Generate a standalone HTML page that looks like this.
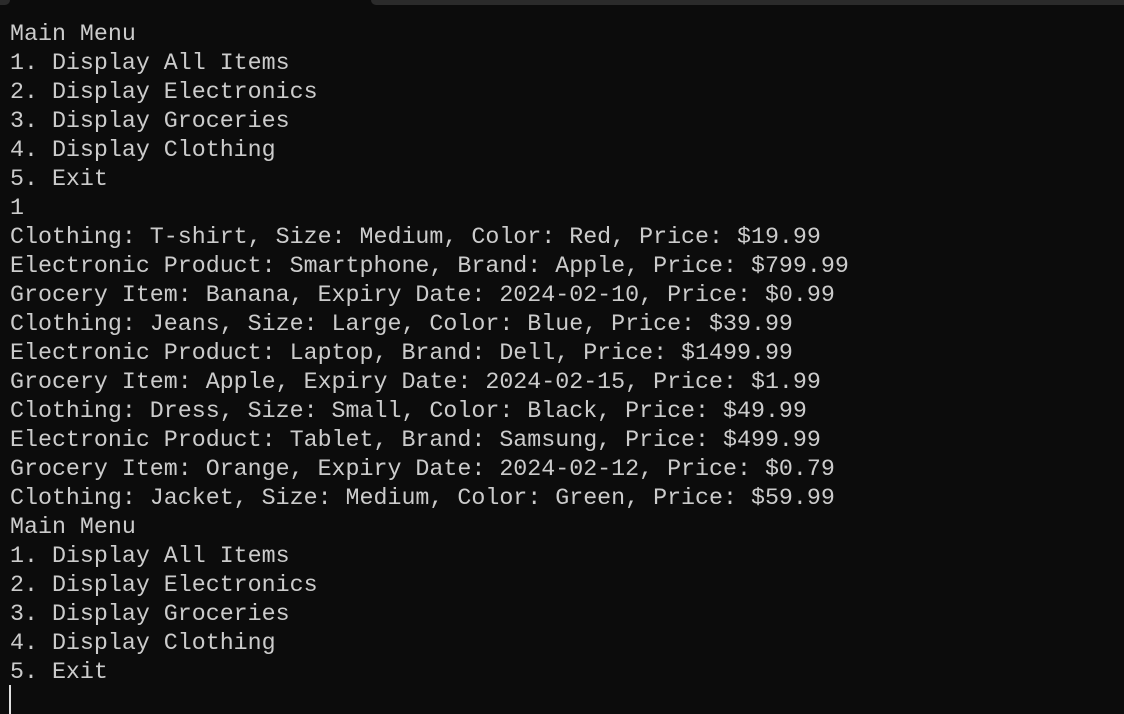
<!DOCTYPE html>
<html><head><style>
html,body{margin:0;padding:0;background:#0c0c0c;width:1124px;height:714px;overflow:hidden}
.t{position:absolute;left:10px;top:20px;font-family:"Liberation Mono",monospace;font-size:23.3px;line-height:29px;color:#cccccc;white-space:pre;margin:0}
.b1{position:absolute;left:0;top:0;width:10px;height:5px;background:#2b2b2b;border-radius:0 0 5px 0}
.b2{position:absolute;left:371px;top:0;width:753px;height:5px;background:#2b2b2b;border-radius:0 0 0 5px}
.c{position:absolute;left:9px;top:685px;width:2px;height:29px;background:#e0e0e0}
</style></head><body>
<div class="b1"></div><div class="b2"></div>
<pre class="t">Main Menu
1. Display All Items
2. Display Electronics
3. Display Groceries
4. Display Clothing
5. Exit
1
Clothing: T-shirt, Size: Medium, Color: Red, Price: $19.99
Electronic Product: Smartphone, Brand: Apple, Price: $799.99
Grocery Item: Banana, Expiry Date: 2024-02-10, Price: $0.99
Clothing: Jeans, Size: Large, Color: Blue, Price: $39.99
Electronic Product: Laptop, Brand: Dell, Price: $1499.99
Grocery Item: Apple, Expiry Date: 2024-02-15, Price: $1.99
Clothing: Dress, Size: Small, Color: Black, Price: $49.99
Electronic Product: Tablet, Brand: Samsung, Price: $499.99
Grocery Item: Orange, Expiry Date: 2024-02-12, Price: $0.79
Clothing: Jacket, Size: Medium, Color: Green, Price: $59.99
Main Menu
1. Display All Items
2. Display Electronics
3. Display Groceries
4. Display Clothing
5. Exit</pre>
<div class="c"></div>
</body></html>
